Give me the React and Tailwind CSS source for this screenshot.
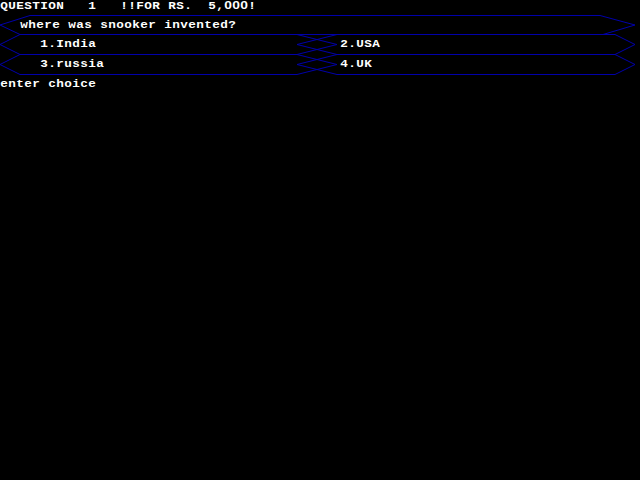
import React from 'react';

// Old BGI-style quiz screen: 8px monospace text over blue hexagon frames.

const LINE = '#0000aa';

const QuestionFrame = () => (
    <svg className="absolute left-0 top-0 overflow-visible" width="640" height="20" viewBox="0 0 640 20">
        <polygon
            points="30,0.5 600,0.5 635,10 603,19.5 20,19.5 0,10"
            fill="none"
            stroke={LINE}
            strokeWidth="1"
        />
    </svg>
);

const OptionFrame = () => (
    <svg className="absolute left-0 top-0 overflow-visible" width="640" height="21" viewBox="0 0 640 21">
        <polygon points="20,0.5 297,0.5 337,10.5 297,20.5 20,20.5 0,10.5" fill="none" stroke={LINE} strokeWidth="1" />
        <polygon points="337,0.5 615,0.5 635,10.5 615,20.5 337,20.5 297,10.5" fill="none" stroke={LINE} strokeWidth="1" />
    </svg>
);

// every character sits in an 8px cell like the BIOS font; zeros get a plain oval
const Txt = ({ children }) => (
    <span
        className="relative block whitespace-pre text-[11px] leading-[10px] font-bold text-white"
        style={{ fontFamily: '"Liberation Mono", "DejaVu Sans Mono", monospace' }}
    >
        {children.split('').map((ch, i) => (
            <span
                key={i}
                className={`inline-block w-[8px] text-center ${ch === '0' ? 'scale-x-125' : 'scale-x-[1.15]'}`}
                style={ch === '0' ? { fontFamily: '"Liberation Sans", Arial, sans-serif' } : undefined}
            >
                {ch}
            </span>
        ))}
    </span>
);

const OptionRow = ({ left, right }) => (
    <div className="relative flex h-[20px] items-center">
        <OptionFrame />
        <div className="relative w-[300px] pl-[40px]"><Txt>{left}</Txt></div>
        <div className="relative pl-[40px]"><Txt>{right}</Txt></div>
    </div>
);

const App = () => {
    return (
        <div className="w-[640px] h-[480px] overflow-hidden bg-black leading-none">
            <div className="h-[15px]">
                <Txt>QUESTION   1   !!FOR RS.  5,000!</Txt>
            </div>
            <div className="relative flex h-[19px] items-center">
                <QuestionFrame />
                <div className="relative pl-[20px]"><Txt>where was snooker invented?</Txt></div>
            </div>
            <OptionRow left="1.India" right="2.USA" />
            <OptionRow left="3.russia" right="4.UK" />
            <div className="pt-[5px]">
                <Txt>enter choice</Txt>
            </div>
        </div>
    );
};

export default App;
